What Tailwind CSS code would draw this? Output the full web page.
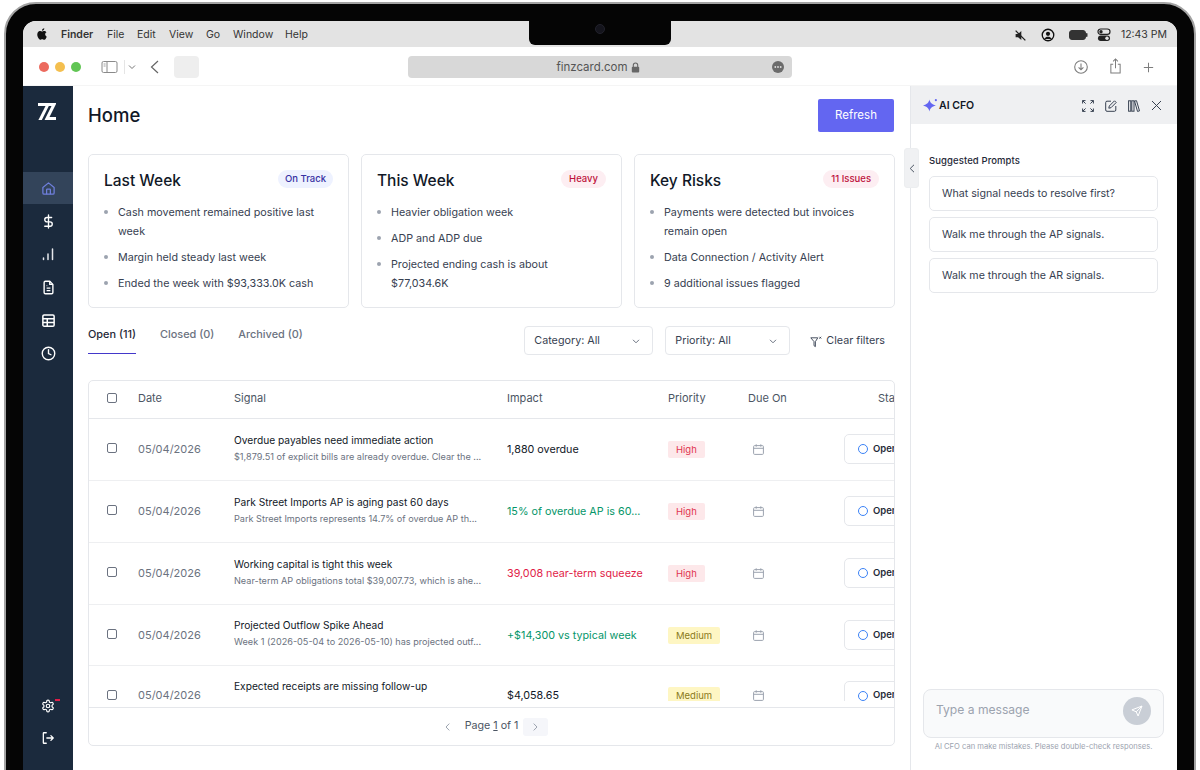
<!DOCTYPE html>
<html lang="en">
<head>
  <meta charset="UTF-8" />
  <meta name="viewport" content="width=device-width, initial-scale=1.0" />
  <title>Finzcard Home</title>
  <script src="https://cdn.jsdelivr.net/npm/@tailwindcss/browser@4"></script>
</head>
<body class="w-[1200px] h-[770px] overflow-hidden bg-white [font-family:Inter,sans-serif]">
  <!-- laptop bezel -->
  <div class="relative ml-[4px] mt-[2px] w-[1192px] h-[790px] rounded-t-[32px] bg-[#050505] border-2 border-[#a3a3a3] pt-[17px] pl-[17px]">
    <!-- notch -->
    <div class="absolute left-[523px] top-0 w-[142px] h-[41px] rounded-b-[6px] bg-[#050505] flex items-center justify-center z-20">
      <div class="w-[10px] h-[10px] mt-[9px] rounded-full bg-[#14141c] border border-[#22222c]"></div>
    </div>

    <div class="w-[1154px] h-[749px] rounded-t-[13px] overflow-hidden bg-white flex flex-col">
      <!-- menu bar -->
      <div class="h-[26px] shrink-0 bg-[#e3e3e3] flex items-center text-[10.5px] text-[#333] pl-[12px] pr-[10px] pt-[2px]">
        <svg class="w-[14px] h-[14px] mr-[12px] -mt-[2px]" viewBox="0 0 24 24" fill="#111"><path d="M18.71 19.5c-.83 1.24-1.71 2.45-3.05 2.47-1.34.03-1.77-.79-3.29-.79-1.53 0-2 .77-3.27.82-1.31.05-2.3-1.32-3.14-2.53C4.25 17 2.94 12.45 4.7 9.39c.87-1.52 2.43-2.48 4.12-2.51 1.28-.02 2.5.87 3.29.87.78 0 2.26-1.07 3.81-.91.65.03 2.47.26 3.64 1.98-.09.06-2.17 1.28-2.15 3.81.03 3.02 2.65 4.03 2.68 4.04-.03.07-.42 1.44-1.38 2.83M13 3.5c.73-.83 1.94-1.46 2.94-1.5.13 1.17-.34 2.35-1.04 3.19-.69.85-1.83 1.51-2.95 1.42-.15-1.15.41-2.35 1.05-3.11z"/></svg>
        <span class="font-semibold w-[46px]">Finder</span>
        <span class="w-[30px]">File</span>
        <span class="w-[32px]">Edit</span>
        <span class="w-[37px]">View</span>
        <span class="w-[27px]">Go</span>
        <span class="w-[52px]">Window</span>
        <span>Help</span>
        <div class="ml-auto flex items-center">
          <svg class="w-[13px] h-[13px] mr-[14px]" viewBox="0 0 16 16"><path d="M2 6h3l4-3.5v11L5 10H2z" fill="#222"/><path d="M2 2l12 12" stroke="#222" stroke-width="1.6"/></svg>
          <svg class="w-[14px] h-[14px] mr-[14px]" viewBox="0 0 16 16"><circle cx="8" cy="8" r="6.6" fill="none" stroke="#111" stroke-width="1.5"/><circle cx="8" cy="6.6" r="2.4" fill="#111"/><path d="M3.8 12.6c1-2 2.4-2.6 4.2-2.6s3.2.6 4.2 2.6" fill="#111"/></svg>
          <svg class="w-[19px] h-[10px] mr-[9px]" viewBox="0 0 19 10"><rect x=".5" y=".5" width="16" height="9" rx="2.5" fill="#333" stroke="#333"/><rect x="17" y="3" width="1.5" height="4" rx=".7" fill="#333"/></svg>
          <svg class="w-[14px] h-[14px] mr-[10px]" viewBox="0 0 14 14"><rect x="1" y="1" width="12" height="5.4" rx="2.7" fill="none" stroke="#222" stroke-width="1.2"/><circle cx="4" cy="3.7" r="1.7" fill="#222"/><rect x="1" y="7.6" width="12" height="5.4" rx="2.7" fill="#222"/><circle cx="10" cy="10.3" r="1.7" fill="#e3e3e3"/></svg>
          <span class="text-[10.5px]">12:43 PM</span>
        </div>
      </div>

      <!-- browser toolbar -->
      <div class="h-[39px] shrink-0 bg-white flex items-center border-b border-[#f5f5f5] pl-[16px] pr-[23px] pt-[2px]">
        <div class="flex gap-[6px]">
          <div class="w-[10px] h-[10px] rounded-full bg-[#ec6a5e]"></div>
          <div class="w-[10px] h-[10px] rounded-full bg-[#f4bf4f]"></div>
          <div class="w-[10px] h-[10px] rounded-full bg-[#61c554]"></div>
        </div>
        <svg class="w-[18px] h-[14px] ml-[20px]" viewBox="0 0 18 14" fill="none" stroke="#8a8a8a"><rect x="1" y="1.5" width="15" height="11" rx="1.5"/><path d="M6 1.5v11"/><path d="M2.6 4h2M2.6 6h2" stroke-width=".8"/></svg>
        <div class="w-px h-[14px] bg-[#e5e5e5] ml-[5px]"></div>
        <svg class="w-[8px] h-[6px] ml-[3px]" viewBox="0 0 8 6" fill="none" stroke="#777" stroke-width="1"><path d="M1 1.5l3 3 3-3"/></svg>
        <svg class="w-[9px] h-[14px] ml-[14px]" viewBox="0 0 9 14" fill="none" stroke="#666" stroke-width="1.2"><path d="M8 1L1.5 7 8 13"/></svg>
        <div class="w-[25px] h-[22px] rounded-[4px] bg-[#eeeeee] ml-[15px]"></div>
        <div class="w-[384px] h-[22px] rounded-[4px] bg-[#d8d8d8] ml-[209px] relative flex items-center justify-center gap-[3px] pr-[4px] pt-[1px] text-[11.5px] text-[#555]">
          <span>finzcard.com</span>
          <svg class="w-[9px] h-[11px]" viewBox="0 0 9 11"><path d="M2.3 5V3.2a2.2 2.2 0 014.4 0V5" fill="none" stroke="#666" stroke-width="1.1"/><rect x=".8" y="4.8" width="7.4" height="5.8" rx="1" fill="#666"/></svg>
          <svg class="absolute right-[8px] top-[5px] w-[12px] h-[12px]" viewBox="0 0 12 12"><circle cx="6" cy="6" r="6" fill="#6b6b6b"/><circle cx="3.3" cy="6" r=".9" fill="#ddd"/><circle cx="6" cy="6" r=".9" fill="#ddd"/><circle cx="8.7" cy="6" r=".9" fill="#ddd"/></svg>
        </div>
        <div class="ml-auto flex items-center gap-[21px]">
          <svg class="w-[14px] h-[14px]" viewBox="0 0 14 14" fill="none" stroke="#7d7d7d" stroke-width="1.1"><circle cx="7" cy="7" r="6.3"/><path d="M7 3.6v6M4.6 7.400L7 9.800l2.400-2.400"/></svg>
          <svg class="w-[13px] h-[16px] -mt-[2px]" viewBox="0 0 14 17" fill="none" stroke="#7d7d7d" stroke-width="1.1"><path d="M4.500 6.500H2v9.500h10V6.500H9.500"/><path d="M7 11V1M4.400 3.400L7 .9l2.600 2.500"/></svg>
          <svg class="w-[11px] h-[11px]" viewBox="0 0 13 13" fill="none" stroke="#7d7d7d" stroke-width="1.2"><path d="M6.500 1v11M1 6.500h11"/></svg>
        </div>
      </div>

      <div class="flex flex-1 min-h-0">
        <!-- sidebar -->
        <aside class="w-[50px] shrink-0 bg-[#1b2a3d] flex flex-col pb-[16px] text-white">
          <div class="h-[86px] shrink-0 pt-[17px] pr-[2px] flex justify-center">
            <svg class="w-[18px] h-[17px]" viewBox="0 0 18 17" fill="white"><path d="M0 0h18v1L10 17H6.500L13.500 3H0z"/><path d="M7.500 3h3.300L3.800 17H.4z"/><path d="M9.500 14h8.500v3H8z"/></svg>
          </div>
          <div class="h-[32px] bg-[#33445a] flex items-center justify-center mb-[1px]">
            <svg class="w-[15px] h-[15px]" viewBox="0 0 24 24" fill="none" stroke="#6f7fdc" stroke-width="2" stroke-linejoin="round"><path d="M3 10.500L12 3l9 7.500V19a2 2 0 01-2 2H5a2 2 0 01-2-2z"/><path d="M9 21v-7a1 1 0 011-1h4a1 1 0 011 1v7"/></svg>
          </div>
          <div class="h-[33px] flex items-center justify-center pb-[1px]">
            <svg class="w-[15px] h-[15px]" viewBox="0 0 24 24" fill="none" stroke="white" stroke-width="2.200" stroke-linecap="round"><path d="M12 1.500v21"/><path d="M17 5.500H9.500a3.500 3.500 0 000 7h5a3.500 3.500 0 010 7H6"/></svg>
          </div>
          <div class="h-[33px] flex items-center justify-center pb-[1px]">
            <svg class="w-[14px] h-[14px]" viewBox="0 0 14 14" fill="none" stroke="#e5e7eb" stroke-width="1.500" stroke-linecap="round"><path d="M2.500 12.500v-1.500M7 12.500V7M11.500 12.500V2"/></svg>
          </div>
          <div class="h-[33px] flex items-center justify-center">
            <svg class="w-[15px] h-[15px]" viewBox="0 0 24 24" fill="none" stroke="white" stroke-width="2.200" stroke-linejoin="round"><path d="M14 2H7a2 2 0 00-2 2v16a2 2 0 002 2h10a2 2 0 002-2V7z"/><path d="M14 2v5h5M9 13h6M9 17h6M9 9h1"/></svg>
          </div>
          <div class="h-[33px] flex items-center justify-center">
            <svg class="w-[15px] h-[15px]" viewBox="0 0 24 24" fill="none" stroke="white" stroke-width="2.400"><rect x="3" y="3" width="18" height="18" rx="2"/><path d="M3 9h18M3 15h18M10 9v12"/></svg>
          </div>
          <div class="h-[33px] flex items-center justify-center">
            <svg class="w-[15px] h-[15px]" viewBox="0 0 24 24" fill="none" stroke="white" stroke-width="2.200" stroke-linecap="round"><circle cx="12" cy="12" r="10"/><path d="M12 6v6l4 2"/></svg>
          </div>
          <div class="mt-auto h-[32px] flex items-center justify-center relative">
            <svg class="w-[14px] h-[14px]" viewBox="0 0 24 24" fill="none" stroke="white" stroke-width="2"><path d="M12.220 2h-.440a2 2 0 00-2 2v.180a2 2 0 01-1 1.730l-.430.250a2 2 0 01-2 0l-.150-.080a2 2 0 00-2.730.730l-.220.380a2 2 0 00.730 2.730l.150.100a2 2 0 011 1.720v.510a2 2 0 01-1 1.740l-.150.090a2 2 0 00-.730 2.730l.220.380a2 2 0 002.730.730l.150-.080a2 2 0 012 0l.430.250a2 2 0 011 1.730V20a2 2 0 002 2h.440a2 2 0 002-2v-.180a2 2 0 011-1.730l.430-.250a2 2 0 012 0l.150.080a2 2 0 002.730-.730l.220-.390a2 2 0 00-.730-2.730l-.150-.080a2 2 0 01-1-1.740v-.500a2 2 0 011-1.740l.150-.090a2 2 0 00.730-2.730l-.220-.380a2 2 0 00-2.730-.730l-.150.080a2 2 0 01-2 0l-.430-.250a2 2 0 01-1-1.730V4a2 2 0 00-2-2z"/><circle cx="12" cy="12" r="3"/></svg>
            <div class="absolute left-[32px] top-[9px] w-[5px] h-[2px] bg-[#e11d48]"></div>
          </div>
          <div class="h-[32px] flex items-center justify-center">
            <svg class="w-[14px] h-[14px]" viewBox="0 0 24 24" fill="none" stroke="white" stroke-width="2.200" stroke-linecap="round" stroke-linejoin="round"><path d="M9 3H5a1 1 0 00-1 1v16a1 1 0 001 1h4M10 12h11M17 8l4 4-4 4"/></svg>
          </div>
        </aside>

        <!-- main -->
        <main class="flex-1 min-w-0 px-[15px] flex flex-col">
          <div class="h-[68px] shrink-0 flex items-start justify-between pt-[13px]">
            <h1 class="text-[18.5px] font-medium text-[#111827] leading-[33px]">Home</h1>
            <button class="w-[76px] h-[33px] mr-[1px] pt-[1px] rounded-[2px] bg-[#6366f1] text-white text-[11.5px]">Refresh</button>
          </div>

          <div class="grid grid-cols-3 gap-[12px] h-[154px] shrink-0">
            <div class="border border-[#e5e7eb] rounded-[5px] px-[15px] pt-[15px]">
              <div class="flex items-start justify-between">
                <h2 class="text-[15.5px] font-medium text-[#111827] leading-[21px]">Last Week</h2>
                <span class="h-[18px] px-[7px] rounded-full bg-[#eef2ff] text-[#3730a3] text-[9.5px] font-medium leading-[18px]">On Track</span>
              </div>
              <ul class="mt-[12px] flex flex-col gap-[7px] text-[10.75px] leading-[19px] text-[#374151]">
                <li class="flex"><span class="w-[4px] h-[4px] rounded-full bg-[#9ca3af] mt-[7px] mr-[10px] shrink-0"></span><span>Cash movement remained positive last week</span></li>
                <li class="flex"><span class="w-[4px] h-[4px] rounded-full bg-[#9ca3af] mt-[7px] mr-[10px] shrink-0"></span><span>Margin held steady last week</span></li>
                <li class="flex"><span class="w-[4px] h-[4px] rounded-full bg-[#9ca3af] mt-[7px] mr-[10px] shrink-0"></span><span>Ended the week with $93,333.0K cash</span></li>
              </ul>
            </div>
            <div class="border border-[#e5e7eb] rounded-[5px] px-[15px] pt-[15px]">
              <div class="flex items-start justify-between">
                <h2 class="text-[15.5px] font-medium text-[#111827] leading-[21px]">This Week</h2>
                <span class="h-[18px] px-[8px] rounded-full bg-[#fdeef2] text-[#be123c] text-[9.5px] font-medium leading-[18px]">Heavy</span>
              </div>
              <ul class="mt-[12px] flex flex-col gap-[7px] text-[10.75px] leading-[19px] text-[#374151]">
                <li class="flex"><span class="w-[4px] h-[4px] rounded-full bg-[#9ca3af] mt-[7px] mr-[10px] shrink-0"></span><span>Heavier obligation week</span></li>
                <li class="flex"><span class="w-[4px] h-[4px] rounded-full bg-[#9ca3af] mt-[7px] mr-[10px] shrink-0"></span><span>ADP and ADP due</span></li>
                <li class="flex"><span class="w-[4px] h-[4px] rounded-full bg-[#9ca3af] mt-[7px] mr-[10px] shrink-0"></span><span>Projected ending cash is about<br />$77,034.6K</span></li>
              </ul>
            </div>
            <div class="border border-[#e5e7eb] rounded-[5px] px-[15px] pt-[15px]">
              <div class="flex items-start justify-between">
                <h2 class="text-[15.5px] font-medium text-[#111827] leading-[21px]">Key Risks</h2>
                <span class="h-[18px] px-[8px] rounded-full bg-[#fdeef2] text-[#be123c] text-[9.5px] font-medium leading-[18px]">11 Issues</span>
              </div>
              <ul class="mt-[12px] flex flex-col gap-[7px] text-[10.75px] leading-[19px] text-[#374151]">
                <li class="flex"><span class="w-[4px] h-[4px] rounded-full bg-[#9ca3af] mt-[7px] mr-[10px] shrink-0"></span><span>Payments were detected but invoices<br />remain open</span></li>
                <li class="flex"><span class="w-[4px] h-[4px] rounded-full bg-[#9ca3af] mt-[7px] mr-[10px] shrink-0"></span><span>Data Connection / Activity Alert</span></li>
                <li class="flex"><span class="w-[4px] h-[4px] rounded-full bg-[#9ca3af] mt-[7px] mr-[10px] shrink-0"></span><span>9 additional issues flagged</span></li>
              </ul>
            </div>
          </div>

          <!-- tabs and filters -->
          <div class="h-[72px] shrink-0 flex items-start pt-[18px]">
            <div class="flex gap-[24px] text-[10.9px] font-medium text-[#6b7280]">
              <div class="h-[28px] border-b-[1.5px] border-[#4338ca] text-[#1f2937] leading-[17px]">Open (11)</div>
              <div class="leading-[17px]">Closed (0)</div>
              <div class="leading-[17px]">Archived (0)</div>
            </div>
            <div class="ml-auto flex items-center text-[10.75px] text-[#374151]">
              <div class="w-[129px] h-[29px] pt-[1px] border border-[#e5e7eb] rounded-[4px] flex items-center justify-between pl-[9px] pr-[12px]">
                <span>Category: All</span>
                <svg class="w-[8px] h-[5px]" viewBox="0 0 8 5" fill="none" stroke="#6b7280"><path d="M1 .8l3 3 3-3"/></svg>
              </div>
              <div class="w-[125px] h-[29px] pt-[1px] border border-[#e5e7eb] rounded-[4px] flex items-center justify-between pl-[9px] pr-[12px] ml-[12px]">
                <span>Priority: All</span>
                <svg class="w-[8px] h-[5px]" viewBox="0 0 8 5" fill="none" stroke="#6b7280"><path d="M1 .8l3 3 3-3"/></svg>
              </div>
              <div class="flex items-center ml-[20px] mr-[10px] gap-[4px] pt-[2px]">
                <svg class="w-[12px] h-[12px]" viewBox="0 0 12 12" fill="none" stroke="#374151" stroke-width=".9"><path d="M.8 1.800h7L5.400 5.600v5l-1.400-.9V5.600z"/><path d="M9.400 .8l1.800 1.800M11.200 .8L9.400 2.600"/></svg>
                <span>Clear filters</span>
              </div>
            </div>
          </div>

          <!-- signals table -->
          <div class="h-[366px] shrink-0 border border-[#e5e7eb] rounded-[5px] overflow-hidden flex flex-col">
            <div class="h-[38px] shrink-0 pb-[2px] border-b border-[#e5e7eb] grid grid-cols-[49px_96px_273px_161px_80px_96px_120px] items-center text-[11px] text-[#4b5563]">
              <div class="pl-[18px]"><div class="w-[10px] h-[10px] border border-[#6b7280] rounded-[2px] -mt-[2px]"></div></div>
              <div>Date</div>
              <div>Signal</div>
              <div>Impact</div>
              <div>Priority</div>
              <div>Due On</div>
              <div class="pl-[34px]">Status</div>
            </div>
            <div class="h-[282px] shrink-0 overflow-hidden">
              <div class="h-[62px] pb-[1px] border-b border-[#eeeff1] grid grid-cols-[49px_96px_273px_161px_80px_96px_120px] items-center">
                <div class="pl-[18px]"><div class="w-[10px] h-[10px] border border-[#6b7280] rounded-[2px] -mt-[2px]"></div></div>
                <div class="text-[11px] text-[#6b7280]">05/04/2026</div>
                <div class="-mt-[3px]"><div class="text-[10.2px] text-[#111827] leading-[16px]">Overdue payables need immediate action</div><div class="text-[9.15px] text-[#6b7280] leading-[14px] mt-[2px]">$1,879.51 of explicit bills are already overdue. Clear the ...</div></div>
                <div class="pt-[2px] text-[10.75px] text-[#111827]">1,880 overdue</div>
                <div><span class="block w-fit h-[17px] px-[8px] rounded-[2px] bg-[#fde8ea] text-[#e0344f] text-[9.5px] leading-[17px]">High</span></div>
                <div class="pl-[5px]"><svg class="block w-[11px] h-[11px]" viewBox="0 0 11 11" fill="none" stroke="#9ca3af" stroke-width="1"><rect x=".6" y="1.600" width="9.800" height="8.800" rx="1"/><path d="M.6 4.300h9.800M3.200 .3v2.400M7.800 .3v2.400"/></svg></div>
                <div><div class="w-[106px] h-[30px] border border-[#e5e7eb] rounded-[5px] flex items-center pl-[13px] gap-[5px] text-[9.5px] font-semibold text-[#1f2937]"><span class="w-[10px] h-[10px] rounded-full border-[1.5px] border-[#3b82f6]"></span>Open</div></div>
              </div>
              <div class="h-[62px] pb-[1px] border-b border-[#eeeff1] grid grid-cols-[49px_96px_273px_161px_80px_96px_120px] items-center">
                <div class="pl-[18px]"><div class="w-[10px] h-[10px] border border-[#6b7280] rounded-[2px] -mt-[2px]"></div></div>
                <div class="text-[11px] text-[#6b7280]">05/04/2026</div>
                <div class="-mt-[3px]"><div class="text-[10.2px] text-[#111827] leading-[16px]">Park Street Imports AP is aging past 60 days</div><div class="text-[9.15px] text-[#6b7280] leading-[14px] mt-[2px]">Park Street Imports represents 14.7% of overdue AP th...</div></div>
                <div class="pt-[2px] text-[10.75px] text-[#059669]">15% of overdue AP is 60...</div>
                <div><span class="block w-fit h-[17px] px-[8px] rounded-[2px] bg-[#fde8ea] text-[#e0344f] text-[9.5px] leading-[17px]">High</span></div>
                <div class="pl-[5px]"><svg class="block w-[11px] h-[11px]" viewBox="0 0 11 11" fill="none" stroke="#9ca3af" stroke-width="1"><rect x=".6" y="1.600" width="9.800" height="8.800" rx="1"/><path d="M.6 4.300h9.800M3.200 .3v2.400M7.800 .3v2.400"/></svg></div>
                <div><div class="w-[106px] h-[30px] border border-[#e5e7eb] rounded-[5px] flex items-center pl-[13px] gap-[5px] text-[9.5px] font-semibold text-[#1f2937]"><span class="w-[10px] h-[10px] rounded-full border-[1.5px] border-[#3b82f6]"></span>Open</div></div>
              </div>
              <div class="h-[62px] pb-[1px] border-b border-[#eeeff1] grid grid-cols-[49px_96px_273px_161px_80px_96px_120px] items-center">
                <div class="pl-[18px]"><div class="w-[10px] h-[10px] border border-[#6b7280] rounded-[2px] -mt-[2px]"></div></div>
                <div class="text-[11px] text-[#6b7280]">05/04/2026</div>
                <div class="-mt-[3px]"><div class="text-[10.2px] text-[#111827] leading-[16px]">Working capital is tight this week</div><div class="text-[9.15px] text-[#6b7280] leading-[14px] mt-[2px]">Near-term AP obligations total $39,007.73, which is ahe...</div></div>
                <div class="pt-[2px] text-[10.75px] text-[#e11d48]">39,008 near-term squeeze</div>
                <div><span class="block w-fit h-[17px] px-[8px] rounded-[2px] bg-[#fde8ea] text-[#e0344f] text-[9.5px] leading-[17px]">High</span></div>
                <div class="pl-[5px]"><svg class="block w-[11px] h-[11px]" viewBox="0 0 11 11" fill="none" stroke="#9ca3af" stroke-width="1"><rect x=".6" y="1.600" width="9.800" height="8.800" rx="1"/><path d="M.6 4.300h9.800M3.200 .3v2.400M7.800 .3v2.400"/></svg></div>
                <div><div class="w-[106px] h-[30px] border border-[#e5e7eb] rounded-[5px] flex items-center pl-[13px] gap-[5px] text-[9.5px] font-semibold text-[#1f2937]"><span class="w-[10px] h-[10px] rounded-full border-[1.5px] border-[#3b82f6]"></span>Open</div></div>
              </div>
              <div class="h-[61px] border-b border-[#eeeff1] grid grid-cols-[49px_96px_273px_161px_80px_96px_120px] items-center">
                <div class="pl-[18px]"><div class="w-[10px] h-[10px] border border-[#6b7280] rounded-[2px] -mt-[2px]"></div></div>
                <div class="text-[11px] text-[#6b7280]">05/04/2026</div>
                <div class="-mt-[5px]"><div class="text-[10.2px] text-[#111827] leading-[16px]">Projected Outflow Spike Ahead</div><div class="text-[9.15px] text-[#6b7280] leading-[14px] mt-[2px]">Week 1 (2026-05-04 to 2026-05-10) has projected outf...</div></div>
                <div class="pt-[2px] text-[10.75px] text-[#059669]">+$14,300 vs typical week</div>
                <div><span class="block w-fit h-[17px] px-[8px] rounded-[2px] bg-[#fef6c3] text-[#8a7a1a] text-[9.5px] leading-[17px]">Medium</span></div>
                <div class="pl-[5px]"><svg class="block w-[11px] h-[11px]" viewBox="0 0 11 11" fill="none" stroke="#9ca3af" stroke-width="1"><rect x=".6" y="1.600" width="9.800" height="8.800" rx="1"/><path d="M.6 4.300h9.800M3.200 .3v2.400M7.800 .3v2.400"/></svg></div>
                <div><div class="w-[106px] h-[30px] border border-[#e5e7eb] rounded-[5px] flex items-center pl-[13px] gap-[5px] text-[9.5px] font-semibold text-[#1f2937]"><span class="w-[10px] h-[10px] rounded-full border-[1.5px] border-[#3b82f6]"></span>Open</div></div>
              </div>
              <div class="h-[62px] pb-[3px] grid grid-cols-[49px_96px_273px_161px_80px_96px_120px] items-center">
                <div class="pl-[18px]"><div class="w-[10px] h-[10px] border border-[#6b7280] rounded-[2px] -mt-[2px]"></div></div>
                <div class="text-[11px] text-[#6b7280]">05/04/2026</div>
                <div class="-mt-[4px]"><div class="text-[10.2px] text-[#111827] leading-[16px]">Expected receipts are missing follow-up</div><div class="text-[9.15px] text-[#6b7280] leading-[14px] mt-[2px]">&nbsp;</div></div>
                <div class="pt-[2px] text-[10.75px] text-[#111827]">$4,058.65</div>
                <div><span class="block w-fit h-[17px] px-[8px] rounded-[2px] bg-[#fef6c3] text-[#8a7a1a] text-[9.5px] leading-[17px]">Medium</span></div>
                <div class="pl-[5px]"><svg class="block w-[11px] h-[11px]" viewBox="0 0 11 11" fill="none" stroke="#9ca3af" stroke-width="1"><rect x=".6" y="1.600" width="9.800" height="8.800" rx="1"/><path d="M.6 4.300h9.800M3.200 .3v2.400M7.800 .3v2.400"/></svg></div>
                <div><div class="w-[106px] h-[30px] border border-[#e5e7eb] rounded-[5px] flex items-center pl-[13px] gap-[5px] text-[9.5px] font-semibold text-[#1f2937]"><span class="w-[10px] h-[10px] rounded-full border-[1.5px] border-[#3b82f6]"></span>Open</div></div>
              </div>
            </div>
            <div class="mt-[6px] flex-1 border-t border-[#e5e7eb] flex items-center justify-center text-[10.7px] text-[#4b5563]">
              <div class="w-[26px] h-[18px] flex items-center justify-center"><svg class="w-[5px] h-[8px]" viewBox="0 0 5 8" fill="none" stroke="#9ca3af"><path d="M4.300.6L1 4l3.300 3.400"/></svg></div>
              <span class="ml-[4px]">Page <span class="underline">1</span> of 1</span>
              <div class="w-[25px] h-[18px] ml-[5px] rounded-[3px] bg-[#f5f6fa] flex items-center justify-center"><svg class="w-[5px] h-[8px]" viewBox="0 0 5 8" fill="none" stroke="#9ca3af"><path d="M.7.6L4 4 .7 7.400"/></svg></div>
            </div>
          </div>
        </main>

        <!-- AI CFO panel -->
        <section class="w-[267px] shrink-0 border-l border-[#e5e7eb] relative flex flex-col">
          <button class="absolute left-[-7px] top-[62px] w-[15px] h-[40px] rounded-[3px] bg-[#f0f1f3] border border-[#eceef0] flex items-center justify-center z-10">
            <svg class="w-[6px] h-[9px]" viewBox="0 0 6 9" fill="none" stroke="#4b5563" stroke-width="1"><path d="M5 .8L1.200 4.500 5 8.200"/></svg>
          </button>
          <div class="h-[38px] shrink-0 bg-[#eff0f2] flex items-center pl-[12px] pr-[15px] pt-[1px]">
            <svg class="w-[15px] h-[15px]" viewBox="0 0 14 14" fill="#6366f1"><path d="M6 1.500c.7 3 2 4.400 6 5.500-4 1.100-5.300 2.500-6 5.500-.7-3-2-4.400-6-5.500 4-1.100 5.300-2.500 6-5.500z"/><circle cx="12" cy="2" r="1"/></svg>
            <span class="ml-[1px] text-[10.5px] font-semibold text-[#111827]">AI CFO</span>
            <div class="ml-auto flex items-center gap-[11px]">
              <svg class="w-[12px] h-[12px]" viewBox="0 0 12 12" fill="none" stroke="#374151" stroke-width="1"><path d="M.6 3.500V.6h2.900M.6.6l3 3M8.500.6h2.900v2.900M11.400.6l-3 3M.6 8.500v2.900h2.900M.6 11.400l3-3M8.500 11.400h2.900V8.500M11.400 11.400l-3-3"/></svg>
              <svg class="w-[12px] h-[12px]" viewBox="0 0 12 12" fill="none" stroke="#374151" stroke-width="1"><path d="M6 1.200H2a1.300 1.300 0 00-1.300 1.300V10A1.300 1.300 0 002 11.300h7.500A1.300 1.300 0 0010.800 10V6"/><path d="M9.500.8l1.700 1.700L6 7.700l-2.200.5.500-2.200z"/></svg>
              <svg class="w-[12px] h-[12px]" viewBox="0 0 12 12" fill="none" stroke="#374151" stroke-width="1"><rect x=".6" y=".8" width="2.200" height="10.400"/><rect x="3.800" y=".8" width="2.200" height="10.400"/><path d="M6.500 1l2-.3 3 10.200-2 .5z"/></svg>
              <svg class="w-[11px] h-[11px]" viewBox="0 0 11 11" fill="none" stroke="#374151" stroke-width="1"><path d="M1 1l9 9M10 1l-9 9"/></svg>
            </div>
          </div>
          <div class="pl-[18px] pr-[19px] pt-[31px]">
            <div class="text-[9.5px] font-medium text-[#1f2937] leading-[12px] tracking-[0.1px]">Suggested Prompts</div>
            <div class="mt-[9px] flex flex-col gap-[6px] text-[10.65px] text-[#374151]">
              <div class="h-[35px] border border-[#e5e7eb] rounded-[5px] flex items-center pl-[12px]">What signal needs to resolve first?</div>
              <div class="h-[35px] border border-[#e5e7eb] rounded-[5px] flex items-center pl-[12px]">Walk me through the AP signals.</div>
              <div class="h-[35px] border border-[#e5e7eb] rounded-[5px] flex items-center pl-[12px]">Walk me through the AR signals.</div>
            </div>
          </div>
          <div class="mt-auto pl-[12px] pr-[13px] pb-[18px]">
            <div class="h-[49px] rounded-[8px] border border-[#e5e7eb] bg-[#f9fafb] flex items-start justify-between pt-[7px] pl-[12px] pr-[12px] text-[12.1px] text-[#9ca3af]">
              <span class="leading-[26px]">Type a message</span>
              <div class="w-[28px] h-[28px] rounded-full bg-[#c9ced6] flex items-center justify-center">
                <svg class="w-[12px] h-[12px]" viewBox="0 0 12 12" fill="none" stroke="white" stroke-width="1"><path d="M11 1L.9 4.900l4.300 1.900L7.100 11zM11 1L5.200 6.800"/></svg>
              </div>
            </div>
            <div class="mt-[4px] text-center text-[7.6px] leading-[10px] text-[#9ca3af]">AI CFO can make mistakes. Please double-check responses.</div>
          </div>
        </section>
      </div>
    </div>
  </div>
</body>
</html>
